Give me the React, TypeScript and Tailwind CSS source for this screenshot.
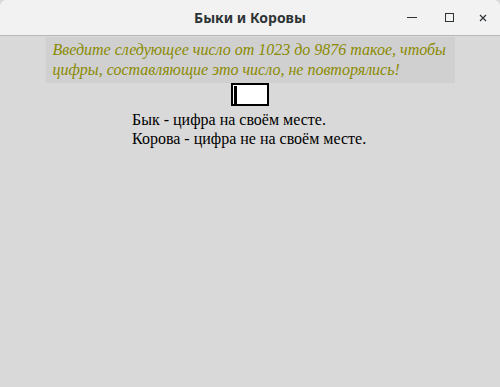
export default function App() {
  return (
    <div className="w-[500px] h-[387px] flex flex-col bg-[#d9d9d9] overflow-hidden">
      {/* Title bar */}
      <div className="relative h-[36px] shrink-0 bg-[#f2f2f2] border-b border-[#b8b8b8] rounded-t-[6px] flex items-center justify-center">
        <span className="text-[14px] font-bold text-[#2e3436]" style={{ fontFamily: '"Noto Sans", "Open Sans", sans-serif' }}>
          Быки и Коровы
        </span>
        <div className="absolute right-0 top-0 h-full flex items-center">
          <div className="w-[40px] flex justify-center">
            <div className="w-[10px] h-[1px] bg-[#2e3436]" />
          </div>
          <div className="w-[34px] flex justify-center">
            <div className="w-[9px] h-[9px] border border-[#2e3436]" />
          </div>
          <div className="w-[34px] flex justify-center text-[#2e3436]">
            <svg width="8" height="8" viewBox="0 0 8 8">
              <path d="M1 1 L7 7 M7 1 L1 7" stroke="currentColor" strokeWidth="1.2" />
            </svg>
          </div>
        </div>
      </div>

      <div className="flex flex-col items-center" style={{ fontFamily: '"Liberation Serif", serif' }}>
        <div className="mt-[1px] w-[409px] h-[46px] bg-[#d0d0d0] pl-[7px] pt-[3px] text-[16px] leading-[20px] italic text-[#8a8a00]">
          Введите следующее число от 1023 до 9876 такое, чтобы цифры, составляющие это число, не повторялись!
        </div>
        <div className="w-[38px] h-[23px] border-2 border-black bg-white flex items-center pl-[1px]">
          <div className="w-[3px] h-[18px] bg-black" />
        </div>
        <div className="mt-[4px] w-[236px] text-[16px] leading-[19px] text-black">
          <div>Бык - цифра на своём месте.</div>
          <div>Корова - цифра не на своём месте.</div>
        </div>
      </div>
    </div>
  );
}
